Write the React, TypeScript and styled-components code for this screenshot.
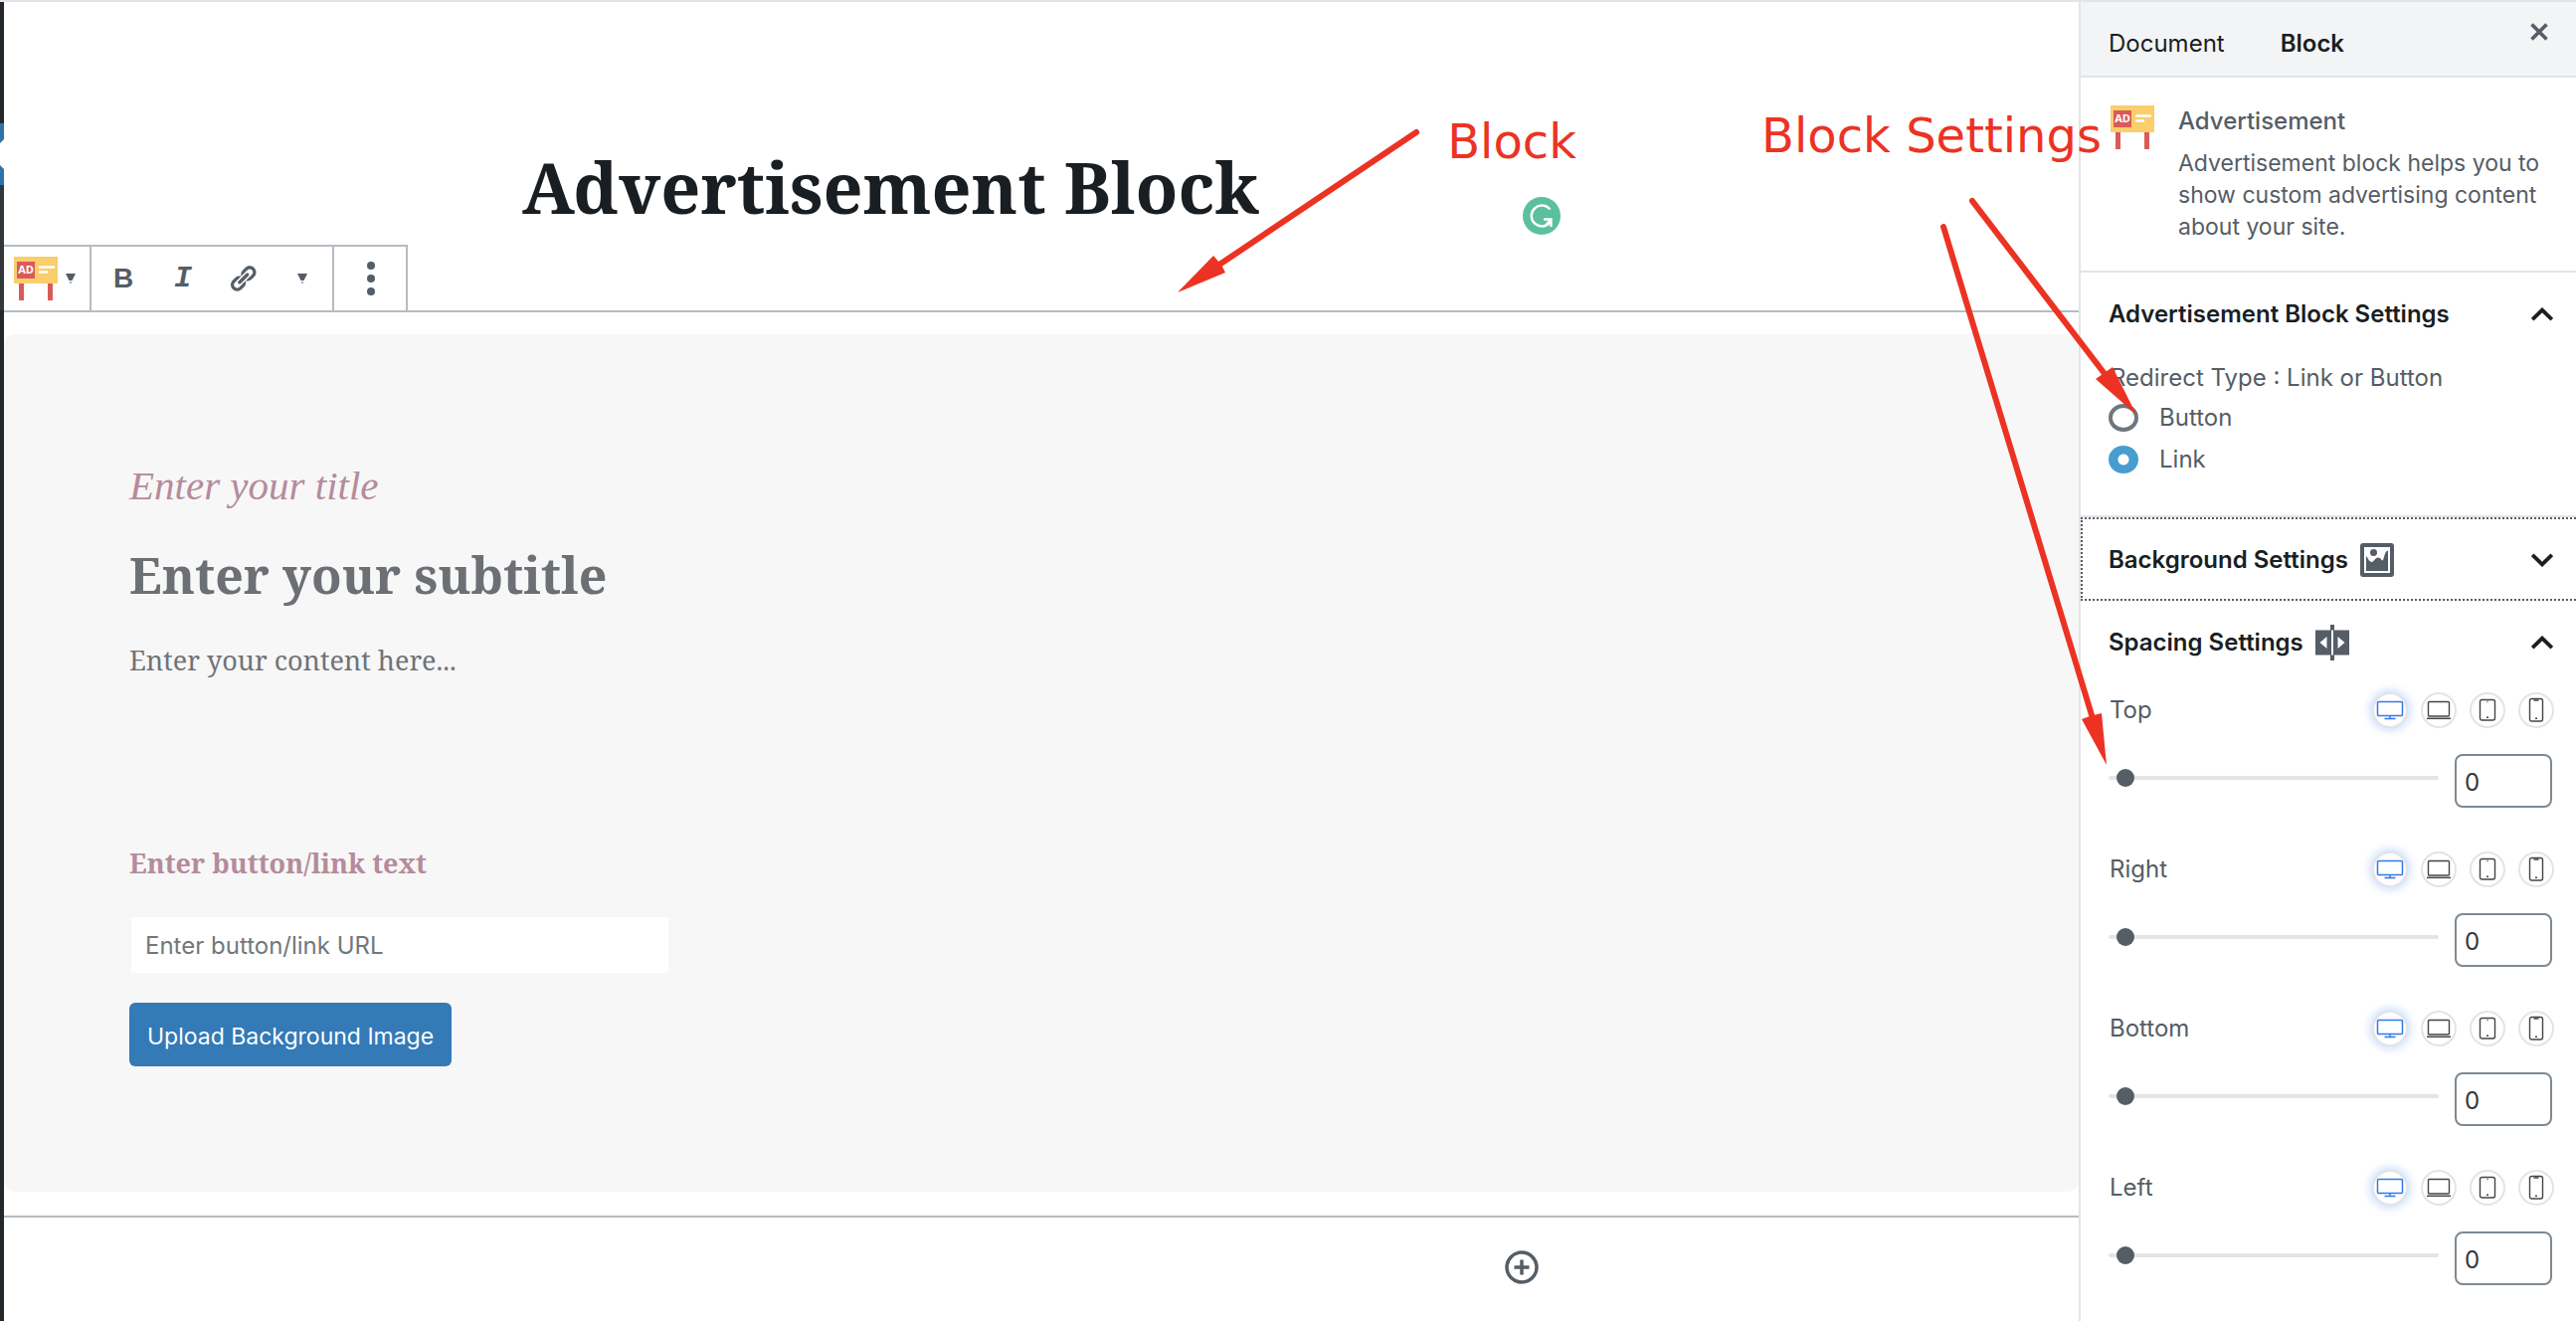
import React, { useState } from "react";
import styled, { createGlobalStyle, css } from "styled-components";

const sans = `Inter, "Liberation Sans", sans-serif`;
const serif = `"Noto Serif", "DejaVu Serif Condensed", "DejaVu Serif", serif`;

const GlobalStyle = createGlobalStyle`
  *, *::before, *::after { box-sizing: border-box; }
  body { margin: 0; background: #fff; font-family: ${sans}; font-size: 24px; line-height: 32px; color: #555d66; }
  button, input { font: inherit; color: inherit; margin: 0; }
  button { border: 0; background: none; padding: 0; cursor: pointer; }
  h1, h2, p, fieldset { margin: 0; padding: 0; border: 0; }
  svg { display: block; flex-shrink: 0; }
`;

const Page = styled.div`
  position: relative;
  display: flex;
  min-height: 100vh;
  border-top: 2px solid #e2e4e7;
  overflow: hidden;
`;

/* Admin menu edge */
const MenuEdge = styled.div`
  flex: 0 0 4px;
  display: flex;
  flex-direction: column;
  background: #23282d;
`;
const MenuCurrent = styled.div`
  height: 62px;
  margin-top: 122px;
  background: #2e74a8;
`;
const MenuOpen = styled.div`
  height: 126px;
  background: #32373c;
`;

/* Editor */
const Editor = styled.main`
  flex: 1;
  min-width: 0;
  display: flex;
  flex-direction: column;
`;
const Column = styled.div`
  width: 100%;
  max-width: 1044px;
  margin: 0 auto;
  display: flex;
  align-items: flex-end;
  justify-content: space-between;
`;
const TitleRow = styled(Column)`
  padding: 138px 0 10px;
`;
const PostTitle = styled.h1`
  font: 700 70px/96px ${serif};
  color: #191e23;
  white-space: nowrap;
`;
const GrammarButton = styled.button`
  width: 38px;
  height: 38px;
`;
const Toolbar = styled.div`
  position: relative;
  z-index: 1;
  align-self: flex-start;
  display: flex;
  height: 68px;
  margin-bottom: -2px;
  border: 2px solid #b5bcc2;
  border-left: 0;
  background: #fff;
`;
const ToolGroup = styled.div<{ $pad?: string }>`
  display: flex;
  align-items: center;
  padding: ${(p) => p.$pad || "0 0 0 2px"};
  & + & { border-left: 2px solid #b5bcc2; }
`;
const ToolButton = styled.button<{ $w?: number }>`
  width: ${(p) => p.$w || 60}px;
  height: 64px;
  display: flex;
  align-items: center;
  justify-content: center;
  color: #555d66;
`;
const TypeButton = styled.button`
  display: flex;
  align-items: center;
  gap: 8px;
`;
const BoldGlyph = styled.span`
  font: 700 28px/32px "Liberation Sans", sans-serif;
`;
const ItalicGlyph = styled.span`
  font: italic 700 30px/32px "Liberation Mono", monospace;
`;
const Block = styled.section`
  padding: 22px 0 24px;
  border: solid #b5bcc2;
  border-width: 2px 0;
`;
const Ad = styled.div`
  display: flex;
  flex-direction: column;
  align-items: flex-start;
  padding: 124px 126px 126px;
  border-radius: 10px;
  background: #f7f7f7;
`;
const AdTitle = styled.p`
  font: italic 400 41px/56px "Apple Chancery", "Liberation Serif", serif;
  color: #b58b9c;
`;
const AdSubtitle = styled.h2`
  margin-top: 24px;
  font: 700 50px/76px ${serif};
  color: #6c7074;
`;
const AdContent = styled.p`
  margin-top: 28px;
  font: 400 27px/40px ${serif};
  color: #6f7377;
`;
const AdLinkText = styled.p`
  margin-top: 164px;
  font: 700 27px/40px ${serif};
  color: #b58b9c;
`;
const UrlInput = styled.input`
  width: 540px;
  height: 56px;
  margin: 34px 0 30px 2px;
  padding: 0 14px;
  border: 0;
  background: #fff;
  &::placeholder { color: #72777c; opacity: 1; }
`;
const UploadButton = styled.button`
  height: 64px;
  padding: 4px 18px 0;
  border-radius: 6px;
  background: #337ab7;
  color: #fff;
  font-size: 23px;
`;
const AppenderRow = styled(Column)`
  justify-content: flex-end;
  padding: 33px 22px 0;
`;

/* Sidebar */
const Sidebar = styled.aside`
  flex: 0 0 500px;
  border-left: 2px solid #e2e4e7;
  background: #fff;
`;
const TabBar = styled.div`
  display: flex;
  height: 76px;
  padding: 10px 28px 0;
  gap: 56px;
  border-bottom: 2px solid #e2e4e7;
  background: #f3f4f5;
`;
const Tab = styled.button<{ $active?: boolean }>`
  color: #191e23;
  font-weight: ${(p) => (p.$active ? 600 : 400)};
`;
const CloseButton = styled.button`
  align-self: flex-start;
  margin: 11px 0 0 auto;
`;
const Card = styled.div`
  display: flex;
  align-items: flex-start;
  gap: 24px;
  padding: 28px 24px 28px 30px;
  border-bottom: 2px solid #e2e4e7;
`;
const CardName = styled.h2`
  margin-bottom: 10px;
  font: 500 24px/32px ${sans};
`;
const CardText = styled.p`
  font-size: 23px;
`;
const Panel = styled.section<{ $line?: boolean }>`
  border-bottom: ${(p) => (p.$line ? "2px solid #e2e4e7" : "0")};
`;
const PanelToggle = styled.button<{ $focused?: boolean }>`
  display: flex;
  align-items: center;
  width: 100%;
  gap: 12px;
  padding: 26px 23px 26px 28px;
  color: #191e23;
  font-weight: 600;
  ${(p) =>
    p.$focused &&
    css`
      padding: 25px 23px 23px 26px;
      border: 2px dotted #555d66;
      border-right: 0;
    `}
`;
const PanelIcon = styled.span`
  height: 32px;
  display: flex;
  align-items: center;
`;
const Arrow = styled.span`
  margin-left: auto;
`;
const RadioBody = styled.fieldset`
  padding: 6px 24px 40px 28px;
  display: flex;
  flex-direction: column;
`;
const Legend = styled.legend`
  padding: 6px 0 8px 2px;
  margin-bottom: -6px;
`;
const RadioRow = styled.label`
  display: flex;
  align-items: center;
  gap: 21px;
  & + & { margin-top: 10px; }
`;
const Radio = styled.input`
  appearance: none;
  width: 30px;
  height: 28px;
  border: 4px solid #6c7781;
  border-radius: 50%;
  background: #fff;
  &:checked {
    border: 0;
    background: radial-gradient(circle, #fff 5px, #479dcf 6px);
  }
`;
const SpacingBody = styled.div`
  display: flex;
  flex-direction: column;
  gap: 44px;
  padding: 8px 22px 0 28px;
`;
const ControlHead = styled.div`
  display: flex;
  align-items: center;
  gap: 13px;
  margin-bottom: 26px;
`;
const ControlLabel = styled.label`
  margin-right: auto;
  padding-left: 1px;
`;
const DeviceButton = styled.button<{ $active?: boolean }>`
  width: 36px;
  height: 36px;
  display: flex;
  align-items: center;
  justify-content: center;
  border: 2px solid #e4e4e4;
  border-radius: 50%;
  background: #fff;
  color: ${(p) => (p.$active ? "#3179e8" : "#444")};
  box-shadow: ${(p) => (p.$active ? "0 0 10px 2px #c5daff" : "none")};
`;
const ControlRow = styled.div`
  display: flex;
  align-items: flex-start;
  gap: 16px;
  padding-right: 2px;
`;
const Slider = styled.input`
  appearance: none;
  flex: 1;
  min-width: 0;
  height: 48px;
  background: transparent;
  &::-webkit-slider-runnable-track {
    height: 4px;
    border-radius: 2px;
    background: #e2e4e7;
  }
  &::-webkit-slider-thumb {
    appearance: none;
    width: 18px;
    height: 18px;
    margin-top: -7px;
    border-radius: 50%;
    background: #555d66;
  }
`;
const NumberBox = styled.input`
  appearance: textfield;
  width: 98px;
  height: 54px;
  padding: 2px 8px 0;
  border: 2px solid #7e8993;
  border-radius: 8px;
  background: #fff;
  color: #32373c;
  &::-webkit-inner-spin-button { display: none; }
`;

/* Annotations drawn over the editor */
const Arrows = styled.svg`
  position: absolute;
  top: -2px;
  right: 0;
  pointer-events: none;
  z-index: 2;
`;
const Callout = styled.span<{ $top: number; $right: number }>`
  position: absolute;
  z-index: 2;
  top: ${(p) => p.$top}px;
  right: ${(p) => p.$right}px;
  font: 400 48px/60px Verdana, "DejaVu Sans", sans-serif;
  color: #ec3323;
  white-space: nowrap;
`;

const MenuPointer = () => (
  <svg width="4" height="62" viewBox="0 0 4 62" aria-hidden="true">
    <path fill="#fff" d="M4 16L0 20v22l4 4z" />
  </svg>
);

const AdIcon = () => (
  <svg width="44" height="44" viewBox="0 0 44 44" aria-hidden="true">
    <path fill="#d95b57" d="M5 26h5v18H5zM34 26h5v18h-5z" />
    <path fill="#facd6d" d="M0 0h44v27H0z" />
    <path fill="#d95b57" d="M3 5h18v17H3z" />
    <text x="12" y="17" textAnchor="middle" fill="#fff" fontFamily="Open Sans, sans-serif" fontWeight="700" fontSize="11">AD</text>
    <path stroke="#fff" strokeWidth="2.4" strokeLinecap="round" d="M26 10.500h14M26 15.500h7" />
  </svg>
);

const Caret = () => (
  <svg width="10" height="10" viewBox="0 0 10 10" aria-hidden="true">
    <path fill="#555d66" d="M0 0h10L6.500 7h-3zM4 8.500h2v1H4z" />
  </svg>
);

const LinkIcon = () => (
  <svg width="30" height="30" viewBox="0 0 20 20" fill="currentColor" aria-hidden="true">
    <path d="M17.74 2.76c1.68 1.69 1.68 4.41 0 6.1l-1.53 1.52c-1.12 1.12-2.7 1.47-4.14 1.09l2.62-2.61.76-.77.76-.76c.84-.84.84-2.2 0-3.04-.84-.85-2.2-.85-3.04 0l-.77.76-3.38 3.38c-.37-1.44-.02-3.02 1.1-4.14l1.52-1.53c1.69-1.68 4.42-1.68 6.1 0zM8.59 13.43l5.34-5.34c.42-.42.42-1.1 0-1.52-.44-.43-1.13-.39-1.53 0l-5.33 5.34c-.42.42-.42 1.1 0 1.52.44.43 1.13.39 1.52 0zm-.76 2.29l4.14-4.15c.38 1.44.03 3.02-1.09 4.14l-1.52 1.53c-1.69 1.68-4.41 1.68-6.1 0-1.68-1.68-1.68-4.42 0-6.1l1.53-1.52c1.12-1.12 2.7-1.47 4.14-1.1l-4.14 4.15c-.85.84-.85 2.2 0 3.05.84.84 2.2.84 3.04 0z" />
  </svg>
);

const DotsIcon = () => (
  <svg width="8" height="34" viewBox="0 0 8 34" fill="currentColor" aria-hidden="true">
    <circle cx="4" cy="4" r="4" /><circle cx="4" cy="17" r="4" /><circle cx="4" cy="30" r="4" />
  </svg>
);

const GrammarIcon = () => (
  <svg width="38" height="38" viewBox="0 0 38 38" fill="none" aria-hidden="true">
    <circle cx="19" cy="19" r="19" fill="#5bc09c" />
    <path stroke="#fff" strokeWidth="2.400" d="M27.500 12.500A10.500 10.500 0 1 0 27.500 25.500" />
    <path stroke="#fff" strokeWidth="2.400" d="M21 22.500h7.500V30M28 23l-4.500 5" />
  </svg>
);

const AddIcon = () => (
  <svg width="34" height="34" viewBox="0 0 34 34" fill="none" stroke="#555d66" aria-hidden="true">
    <circle cx="17" cy="17" r="15" strokeWidth="3.500" />
    <path strokeWidth="3.500" d="M17 9.500v15M9.500 17h15" />
  </svg>
);

const CloseIcon = () => (
  <svg width="18" height="18" viewBox="0 0 18 18" aria-hidden="true">
    <path stroke="#555d66" strokeWidth="3.600" d="M1.500 1.500l15 15M16.500 1.500l-15 15" />
  </svg>
);

const Chevron = ({ up }: { up?: boolean }) => (
  <svg width="22" height="14" viewBox="0 0 22 14" fill="none" aria-hidden="true">
    <path stroke="#191e23" strokeWidth="3.800" d={up ? "M1.200 12.200L11 2.600l9.800 9.600" : "M1.200 1.800L11 11.400l9.800-9.600"} />
  </svg>
);

const ImageIcon = () => (
  <svg width="34" height="34" viewBox="0 0 34 34" aria-hidden="true">
    <rect width="34" height="34" rx="3" fill="#555d66" />
    <path fill="#fff" d="M4 4h26v26H4z" />
    <circle cx="13.500" cy="9.500" r="3.500" fill="#555d66" />
    <path fill="#555d66" d="M6 13c2 2 3 6 5.500 6S15 14.500 18 14.500s3 3 4.500 3S24 8 28 7.500V28H6z" />
  </svg>
);

const SpacingIcon = () => (
  <svg width="34" height="36" viewBox="0 0 34 36" aria-hidden="true">
    <path fill="#555d66" d="M0 5.500h34v25H0zM15 0h4v36h-4z" />
    <path fill="#fff" d="M16 5.500h2v25h-2zM4.500 18l7-6v12zM29.500 18l-7-6v12z" />
  </svg>
);

const devices = [
  {
    name: "Desktop",
    art: <svg width="28" height="20" viewBox="0 0 28 20" fill="none" stroke="currentColor" aria-hidden="true"><rect x="1.500" y="1.500" width="25" height="14" rx="1" strokeWidth="1.500" /><path d="M14 16v3M8.500 18.500h11" strokeWidth="1.500" /></svg>,
  },
  {
    name: "Laptop",
    art: <svg width="24" height="20" viewBox="0 0 24 20" fill="none" stroke="currentColor" aria-hidden="true"><rect x="1.500" y="1.500" width="21" height="14.500" rx="1" strokeWidth="1.400" /><path d="M0 18.300h24" strokeWidth="1.500" /></svg>,
  },
  {
    name: "Tablet",
    art: <svg width="18" height="24" viewBox="0 0 18 24" fill="none" stroke="currentColor" aria-hidden="true"><rect x="1.500" y="1.500" width="15" height="20.500" rx="2" strokeWidth="1.400" /><path d="M8.500 3.500h1M8 19.300h2" strokeWidth="1.600" /></svg>,
  },
  {
    name: "Phone",
    art: <svg width="16" height="26" viewBox="0 0 16 26" fill="none" stroke="currentColor" aria-hidden="true"><rect x="1.500" y="1.500" width="13" height="22.500" rx="2" strokeWidth="1.400" /><path d="M5.500 3h5M7 21.200h2" strokeWidth="1.600" /></svg>,
  },
];

const SpacingControl = ({ side }: { side: string }) => {
  const [value, setValue] = useState(0);
  const id = `spacing-${side.toLowerCase()}`;
  return (
    <div>
      <ControlHead>
        <ControlLabel htmlFor={id}>{side}</ControlLabel>
        {devices.map((d, i) => (
          <DeviceButton key={d.name} type="button" aria-label={`${side} ${d.name}`} $active={i === 0}>{d.art}</DeviceButton>
        ))}
      </ControlHead>
      <ControlRow>
        <Slider id={id} type="range" min={-5} max={200} value={value} onChange={(e) => setValue(Number(e.target.value))} />
        <NumberBox type="number" aria-label={`${side} value`} value={value} onChange={(e) => setValue(Number(e.target.value))} />
      </ControlRow>
    </div>
  );
};

export default function App() {
  const [redirect, setRedirect] = useState("Link");
  return (
    <>
      <GlobalStyle />
      <Page>
        <MenuEdge>
          <MenuCurrent><MenuPointer /></MenuCurrent>
          <MenuOpen />
        </MenuEdge>
        <Editor>
          <TitleRow>
            <PostTitle>Advertisement Block</PostTitle>
            <GrammarButton type="button" aria-label="Check grammar"><GrammarIcon /></GrammarButton>
          </TitleRow>
          <Toolbar role="toolbar">
            <ToolGroup $pad="0 14px 0 10px">
              <TypeButton type="button" aria-label="Change block type"><AdIcon /><Caret /></TypeButton>
            </ToolGroup>
            <ToolGroup>
              <ToolButton type="button" aria-label="Bold"><BoldGlyph>B</BoldGlyph></ToolButton>
              <ToolButton type="button" aria-label="Italic"><ItalicGlyph>I</ItalicGlyph></ToolButton>
              <ToolButton type="button" aria-label="Link"><LinkIcon /></ToolButton>
              <ToolButton type="button" aria-label="More formatting"><Caret /></ToolButton>
            </ToolGroup>
            <ToolGroup>
              <ToolButton type="button" aria-label="More options" $w={70}><DotsIcon /></ToolButton>
            </ToolGroup>
          </Toolbar>
          <Block>
            <Ad>
              <AdTitle>Enter your title</AdTitle>
              <AdSubtitle>Enter your subtitle</AdSubtitle>
              <AdContent>Enter your content here...</AdContent>
              <AdLinkText>Enter button/link text</AdLinkText>
              <UrlInput type="url" placeholder="Enter button/link URL" aria-label="Enter button/link URL" />
              <UploadButton type="button">Upload Background Image</UploadButton>
            </Ad>
          </Block>
          <AppenderRow>
            <button type="button" aria-label="Add block"><AddIcon /></button>
          </AppenderRow>
        </Editor>

        <Sidebar>
          <TabBar>
            <Tab type="button">Document</Tab>
            <Tab type="button" $active>Block</Tab>
            <CloseButton type="button" aria-label="Close settings"><CloseIcon /></CloseButton>
          </TabBar>
          <Card>
            <AdIcon />
            <div>
              <CardName>Advertisement</CardName>
              <CardText>Advertisement block helps you to show custom advertising content about your site.</CardText>
            </div>
          </Card>
          <Panel $line>
            <PanelToggle type="button" aria-expanded="true">
              Advertisement Block Settings
              <Arrow><Chevron up /></Arrow>
            </PanelToggle>
            <RadioBody>
              <Legend>Redirect Type : Link or Button</Legend>
              {["Button", "Link"].map((kind) => (
                <RadioRow key={kind}>
                  <Radio type="radio" name="redirect" checked={redirect === kind} onChange={() => setRedirect(kind)} />
                  {kind}
                </RadioRow>
              ))}
            </RadioBody>
          </Panel>
          <Panel>
            <PanelToggle type="button" aria-expanded="false" $focused>
              Background Settings
              <PanelIcon><ImageIcon /></PanelIcon>
              <Arrow><Chevron /></Arrow>
            </PanelToggle>
          </Panel>
          <Panel>
            <PanelToggle type="button" aria-expanded="true">
              Spacing Settings
              <PanelIcon><SpacingIcon /></PanelIcon>
              <Arrow><Chevron up /></Arrow>
            </PanelToggle>
            <SpacingBody>
              {["Top", "Right", "Bottom", "Left"].map((side) => (
                <SpacingControl key={side} side={side} />
              ))}
            </SpacingBody>
          </Panel>
        </Sidebar>

        <Callout $top={110} $right={1005}>Block</Callout>
        <Callout $top={104} $right={477}>Block Settings</Callout>
        <Arrows width="1420" height="800" viewBox="1170 0 1420 800" fill="#ec3323" stroke="#ec3323" aria-hidden="true">
          <path strokeWidth="6" strokeLinecap="round" d="M1424 133L1226 266M1983 202L2117 377M1954 228L2104 722" />
          <path stroke="none" d="M1184 294L1220 257 1226 264 1229 268 1232 274zM2148 417L2107 381 2124 369zM2118 769L2093 723 2101 720 2113 717z" />
        </Arrows>
      </Page>
    </>
  );
}
